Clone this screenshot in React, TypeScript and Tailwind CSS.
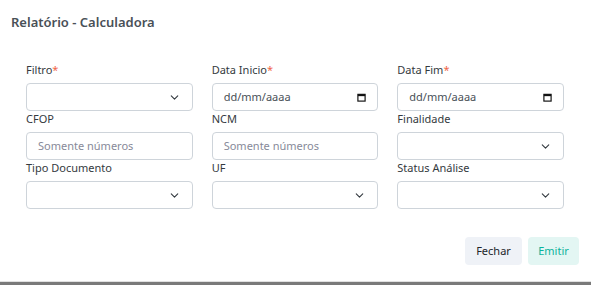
import { ChevronDown } from 'lucide-react';

const font = { fontFamily: '"Noto Sans", "Open Sans", sans-serif' };

function Label({ text, required }: { text: string; required?: boolean }) {
  return (
    <div className="mb-[6px] h-[15px] text-[11px] leading-[15px] text-[#343a40]">
      {text}
      {required && <span className="text-[#f06548]">*</span>}
    </div>
  );
}

function SelectBox() {
  return (
    <div className="flex h-[28px] items-center justify-end rounded-[4px] border border-[#ced4da] bg-white pr-[11px]">
      <ChevronDown size={13} strokeWidth={2} className="text-[#343a40]" />
    </div>
  );
}

function DateBox() {
  return (
    <div className="flex h-[28px] items-center justify-between rounded-[4px] border border-[#ced4da] bg-white pl-[11px] pr-[11px] text-[11px] text-[#495057]">
      <span>dd/mm/aaaa</span>
      <svg width="9" height="9" viewBox="0 0 10 10" fill="none">
        <rect x="1" y="1.5" width="8" height="7.5" stroke="#111" strokeWidth="1.3" />
        <rect x="1" y="1.5" width="8" height="2" fill="#111" />
      </svg>
    </div>
  );
}

function TextBox({ placeholder }: { placeholder: string }) {
  return (
    <div className="flex h-[28px] items-center rounded-[4px] border border-[#ced4da] bg-white px-[11px] text-[11px] text-[#878a99]">
      {placeholder}
    </div>
  );
}

export default function App() {
  return (
    <div className="flex h-[285px] w-[591px] flex-col bg-white" style={font}>
      <div className="flex-1">
        <h5 className="px-[11px] pt-[13px] text-[13px] font-semibold leading-[18px] text-[#495057]">
          Relatório - Calculadora
        </h5>
        <div className="mt-[31px] grid grid-cols-3 gap-x-[19px] pl-[26px] pr-[27px]">
          <div className="flex flex-col">
            <Label text="Filtro" required />
            <SelectBox />
          </div>
          <div className="flex flex-col">
            <Label text="Data Inicio" required />
            <DateBox />
          </div>
          <div className="flex flex-col">
            <Label text="Data Fim" required />
            <DateBox />
          </div>

          <div className="flex flex-col">
            <Label text="CFOP" />
            <TextBox placeholder="Somente números" />
          </div>
          <div className="flex flex-col">
            <Label text="NCM" />
            <TextBox placeholder="Somente números" />
          </div>
          <div className="flex flex-col">
            <Label text="Finalidade" />
            <SelectBox />
          </div>

          <div className="flex flex-col">
            <Label text="Tipo Documento" />
            <SelectBox />
          </div>
          <div className="flex flex-col">
            <Label text="UF" />
            <SelectBox />
          </div>
          <div className="flex flex-col">
            <Label text="Status Análise" />
            <SelectBox />
          </div>
        </div>
        <div className="mt-[28px] flex justify-end gap-[6px] pr-[12px]">
          <button className="h-[28px] w-[57px] rounded-[4px] bg-[#eff2f7] text-[11px] text-[#212529]">
            Fechar
          </button>
          <button className="h-[28px] w-[51px] rounded-[4px] bg-[#e3f6f3] text-[11px] text-[#0ab39c]">
            Emitir
          </button>
        </div>
      </div>
      <div className="h-[1px] bg-[#e0e0e0]" />
      <div className="h-[3px] bg-[#7a7a7a]" />
    </div>
  );
}
